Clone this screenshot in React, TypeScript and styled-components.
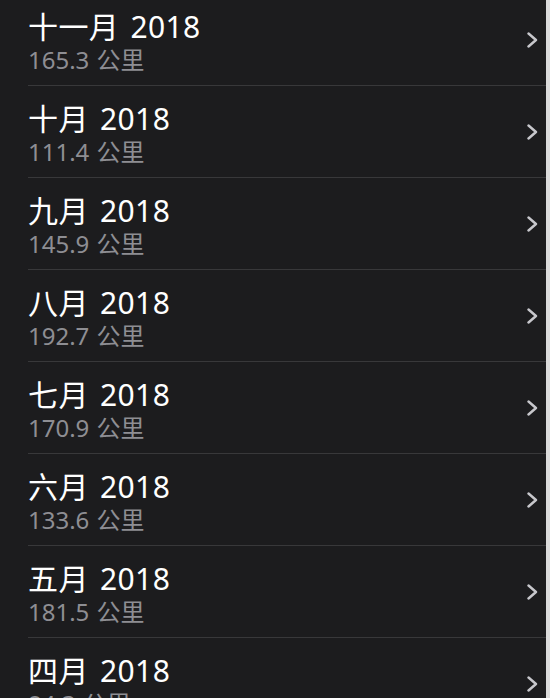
import React from "react";
import styled, { createGlobalStyle } from "styled-components";

const Global = createGlobalStyle`
  html, body { margin: 0; padding: 0; background: #1c1c1e; }
  body { overflow: hidden; font-family: "Noto Sans", "Noto Sans CJK SC", sans-serif; }
`;

const Page = styled.div`
  display: flex;
  width: 550px;
  height: 698px;
  overflow: hidden;
  background: #1c1c1e;
`;

const List = styled.div`
  flex: 1;
  display: flex;
  flex-direction: column;
  margin-top: -6px;
`;

const Edge = styled.div`
  width: 4px;
  flex: none;
  background: #dcdcdc;
`;

const Row = styled.div`
  flex: none;
  height: 92px;
  box-sizing: border-box;
  display: flex;
  align-items: center;
  margin-left: 28px;
  border-bottom: 1px solid #38383a;
`;

const Text = styled.div`
  flex: 1;
  display: flex;
  flex-direction: column;
  align-self: flex-start;
  padding-top: 15px;
`;

const Title = styled.div`
  color: #ffffff;
  font-size: 30px;
  line-height: 36px;
  letter-spacing: 0.4px;
  word-spacing: 3px;
  white-space: nowrap;
`;

const Sub = styled.div`
  color: #8e8e93;
  font-size: 24px;
  line-height: 30px;
  word-spacing: 1px;
  white-space: nowrap;
`;

const Chevron = styled.svg`
  width: 11px;
  height: 16px;
  margin-right: 8px;
  flex: none;
`;

const rows = [
  ["十一月 2018", "165.3 公里"],
  ["十月 2018", "111.4 公里"],
  ["九月 2018", "145.9 公里"],
  ["八月 2018", "192.7 公里"],
  ["七月 2018", "170.9 公里"],
  ["六月 2018", "133.6 公里"],
  ["五月 2018", "181.5 公里"],
  ["四月 2018", "84.3 公里"],
];

export default function App() {
  return (
    <Page>
      <Global />
      <List>
        {rows.map(([t, s]) => (
          <Row key={t}>
            <Text>
              <Title>{t}</Title>
              <Sub>{s}</Sub>
            </Text>
            <Chevron viewBox="0 0 11 16">
              <polyline
                points="1.5,1.5 9,8 1.5,14.5"
                fill="none"
                stroke="#c7c7cc"
                strokeWidth="2.4"
                strokeLinecap="round"
                strokeLinejoin="round"
              />
            </Chevron>
          </Row>
        ))}
      </List>
      <Edge />
    </Page>
  );
}
